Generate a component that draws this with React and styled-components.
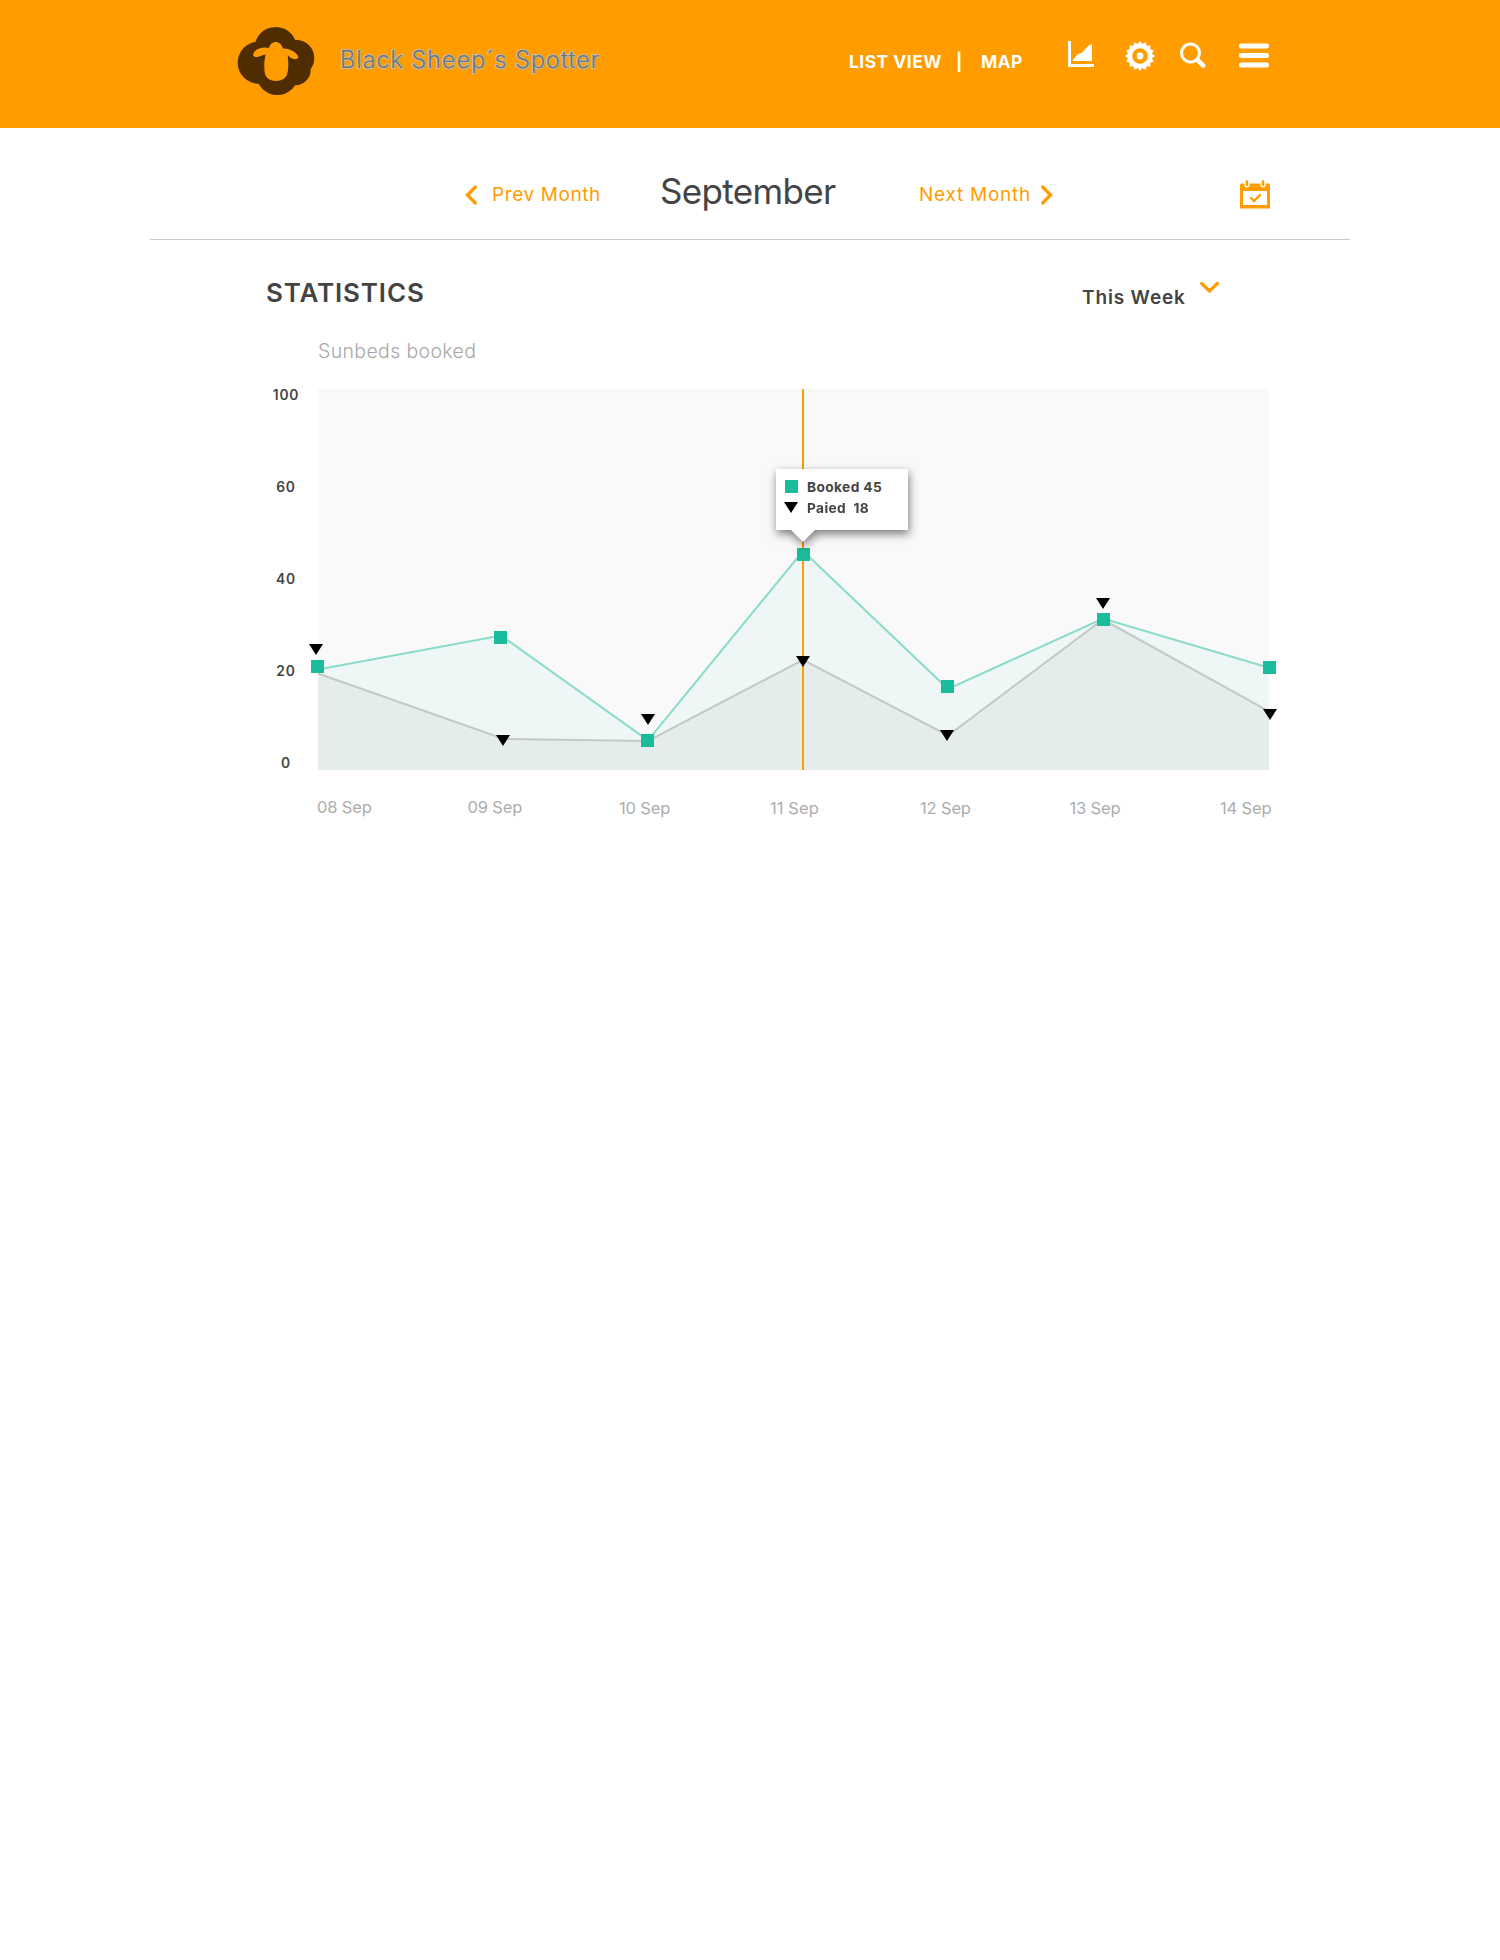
import React from "react";
import styled, { createGlobalStyle } from "styled-components";

const ORANGE = "#ff9d00";
const TEAL = "#1bbc9b";
const DARK = "#444444";

const GlobalStyle = createGlobalStyle`
  * { box-sizing: border-box; }
  body { margin: 0; background: #fff; font-family: Inter, "Liberation Sans", sans-serif; }
  h1, h2, p { margin: 0; font-weight: inherit; }
  button { border: 0; padding: 0; background: none; font: inherit; color: inherit; text-align: left; }
  svg { display: block; flex: none; overflow: visible; }
`;

const Page = styled.div`
  width: 1500px;
  min-height: 1960px;
  background: #fff;
`;

const Label = styled.span`
  display: block;
  flex: none;
  white-space: pre;
  width: ${(p) => p.$w}px;
  font-size: ${(p) => p.$size}px;
  font-weight: ${(p) => p.$weight || 400};
  letter-spacing: ${(p) => p.$track || 0}px;
  line-height: ${(p) => p.$line || 24}px;
  color: ${(p) => p.$color || "inherit"};
`;

const Header = styled.header`
  height: 128px;
  padding: 15px 230px 0 225px;
  display: flex;
  justify-content: space-between;
  background: ${ORANGE};
  color: #fff;
`;

const Brand = styled.div`
  display: flex;
  gap: 15px;
`;

const BrandName = styled(Label)`
  margin-top: 33px;
  color: #74736f;
  -webkit-text-stroke: 2px #c2bbac;
  paint-order: stroke fill;
`;

const Nav = styled.nav`
  display: flex;
  flex: none;
  align-items: flex-start;
  padding-top: 20px;
  width: 421px;
`;

const NavLinks = styled.div`
  display: flex;
  flex: none;
  width: 219px;
  margin-top: 15px;
`;

const Icons = styled.div`
  display: flex;
  flex: none;
  align-items: flex-start;
  padding-top: 6px;
`;

const IconButton = styled.button`
  margin-left: ${(p) => p.$gap || 0}px;
  padding-top: ${(p) => p.$drop || 0}px;
`;

const MonthBar = styled.section`
  width: 1200px;
  height: 112px;
  margin: 0 auto;
  padding: 47px 80px 0 315px;
  display: flex;
  border-bottom: 1px solid #cbcbcf;
  color: ${ORANGE};
`;

const MonthLink = styled.button`
  display: flex;
  align-items: center;
  height: 38px;
  gap: ${(p) => p.$gap}px;
  padding-top: 1px;
  margin-right: ${(p) => p.$after}px;
`;

const CalendarButton = styled.button`
  margin: 0 0 0 auto;
  height: 38px;
`;

const Panel = styled.section`
  padding: 38px 230px 0 266px;
`;

const PanelHead = styled.div`
  display: flex;
  height: 61px;
`;

const Period = styled.button`
  display: flex;
  align-items: flex-start;
  height: 40px;
  margin-left: auto;
  margin-right: 51px;
  gap: 13px;
`;

const Caption = styled(Label)`
  margin-left: 52px;
`;

const ChartRow = styled.div`
  display: flex;
  margin-top: 26px;
`;

const YAxis = styled.div`
  width: 52px;
  padding: 0 14px 0 0;
  margin-top: -6px;
  display: flex;
  flex-direction: column;
  gap: 68px;
  text-align: center;
`;

const Tick = styled.div`
  height: 24px;
  padding-left: 2px;
  line-height: 24px;
  font-size: 13.8px;
  font-weight: 600;
  letter-spacing: 0.8px;
  color: ${DARK};
`;

const Plot = styled.div`
  position: relative;
  width: 951px;
  height: 381px;
  background: #f9f9f9;
`;

const Tooltip = styled.div`
  position: absolute;
  left: 458px;
  top: 80px;
  width: 132px;
  height: 61px;
  padding: 7px 0 0 8px;
  background: #fff;
  filter: drop-shadow(1px 4px 5px rgba(0, 0, 0, 0.5));
  &::after {
    content: "";
    position: absolute;
    left: 15px;
    top: 61px;
    border: 12px solid transparent;
    border-top-color: #fff;
    border-bottom: 0;
  }
`;

const TipRow = styled.div`
  display: flex;
  align-items: center;
  height: 21px;
  gap: 9px;
`;

const XAxis = styled.div`
  display: flex;
  margin: 20px 0 0 51px;
  width: 1000px;
`;

const DateCell = styled.div`
  flex: 0 0 150.5px;
  padding-top: ${(p) => (p.$drop ? 1 : 0)}px;
  padding-left: ${(p) => p.$inset || 0}px;
`;

const Sheep = () => (
  <svg width="100" height="90" viewBox="0 0 300 270">
    <g fill="#4f2d00">
      <circle cx="152" cy="100" r="64" />
      <circle cx="101" cy="143" r="63" />
      <circle cx="214" cy="129" r="54" />
      <circle cx="211" cy="165" r="46" />
      <circle cx="157" cy="176" r="64" />
    </g>
    <path
      fill={ORANGE}
      d="M132 99 C134 88 143 81 152 81 C162 81 171 89 174 101 C190 99 216 112 220 126 C220 135 202 136 188 121 C191 145 190 160 188 172 C184 191 170 198 153 198 C136 198 122 191 119 172 C117 155 117 138 122 119 C109 119 104 127 92 126 C84 125 82 117 88 110 C99 97 120 95 132 99 Z"
    />
  </svg>
);

const StatsIcon = () => (
  <svg width="27" height="26" viewBox="0 0 27 26" fill="#fff">
    <path d="M0 0H3V23H26V26H0Z" />
    <path d="M5 20V19L8.5 14.3C10 12.3 12.5 13.2 14.5 11.3L19 6C20.5 4.2 22 4.2 24 2.5V20Z" />
  </svg>
);

const gearPoints = Array.from({ length: 32 }, (_, i) => {
  const r = i % 2 ? 12.2 : 14.9;
  const a = (i * Math.PI) / 16 - Math.PI / 2;
  return `${(15 + r * Math.cos(a)).toFixed(2)},${(15 + r * Math.sin(a)).toFixed(2)}`;
}).join(" ");

const GearIcon = () => (
  <svg width="30" height="30" viewBox="0 0 30 30">
    <polygon points={gearPoints} fill="#fff" />
    <circle cx="15" cy="15" r="5.6" fill="none" stroke={ORANGE} strokeWidth="4.4" />
  </svg>
);

const SearchIcon = () => (
  <svg width="26" height="27" viewBox="0 0 26 27" fill="none" stroke="#fff">
    <circle cx="10.5" cy="11" r="9" strokeWidth="3" />
    <path d="M17.5 18L23.3 23.7" strokeWidth="4.6" strokeLinecap="round" />
  </svg>
);

const MenuIcon = () => (
  <svg width="30" height="25" viewBox="0 0 30 25" fill="#fff">
    <rect width="30" height="5" rx="2.2" y="0.5" />
    <rect width="30" height="5" rx="2.2" y="10" />
    <rect width="30" height="5" rx="2.2" y="19.5" />
  </svg>
);

const Chevron = ({ w, h, d, sw = 3.3 }) => (
  <svg width={w} height={h} viewBox={`0 0 ${w} ${h}`} fill="none" stroke={ORANGE} strokeWidth={sw} strokeLinecap="round">
    <path d={d} />
  </svg>
);

const CalendarIcon = () => (
  <svg width="30" height="28" viewBox="0 0 30 28">
    <path fill={ORANGE} d="M1 3.5H29L30 4.5V28.5H0V4.5Z" />
    <path fill="#fff" d="M3 11H27V25H3Z" />
    <path d="M7 1.5V4.8M23 1.5V4.8" stroke="#fff" strokeWidth="5.4" strokeLinecap="round" />
    <path d="M7 1.6V4.8M23 1.6V4.8" stroke={ORANGE} strokeWidth="2.6" strokeLinecap="round" />
    <path d="M11 18L14 21L20 15" fill="none" stroke={ORANGE} strokeWidth="2.4" strokeLinecap="round" />
  </svg>
);

const booked = [[0, 280.4], [183, 246.5], [330, 351.3], [485, 162], [630, 300], [785, 229.5], [951, 278.8]];
const paid = [[0, 284.5], [186, 350], [330, 352], [485, 270.8], [630, 346.5], [785, 230.5], [951, 322.3]];
const squares = [[-7, 271], [176, 242], [323, 345], [479, 159], [623, 291], [779, 224], [945, 272]];
const triangles = [[-9, 255], [178, 346], [323, 325], [478, 267], [622, 341], [778, 209], [945, 320]];
const line = (pts) => pts.map((p) => p.join(",")).join(" ");
const area = (pts) => `0,381 ${line(pts)} 951,381`;

const Triangle = () => (
  <svg width="14" height="11" viewBox="0 0 14 11">
    <path d="M0 0H14L7 11Z" />
  </svg>
);

const Swatch = styled.i`
  width: 13px;
  height: 13px;
  margin-left: 1px;
  background: ${TEAL};
`;

const Chart = () => (
  <svg width="951" height="381" viewBox="0 0 951 381">
    <polygon points={area(booked)} fill="#eef7f5" />
    <polygon points={area(paid)} fill="#e4edeb" />
    <polyline points={line(paid)} fill="none" stroke="#c2c9c7" strokeWidth="2" />
    <polyline points={line(booked)} fill="none" stroke="#8adbc9" strokeWidth="2" />
    <rect x="484" y="0" width="2" height="381" fill={ORANGE} />
    {squares.map(([x, y]) => (
      <rect key={x} x={x} y={y} width="13" height="13" fill={TEAL} />
    ))}
    {triangles.map(([x, y]) => (
      <path key={x} d={`M${x} ${y}h14l-7 11z`} />
    ))}
  </svg>
);

const days = [
  { label: "08 Sep" },
  { label: "09 Sep" },
  { label: "10 Sep", inset: 1 },
  { label: "11 Sep", inset: 1.5, track: 0.1 },
  { label: "12 Sep", inset: 1 },
  { label: "13 Sep" },
  { label: "14 Sep" },
];

export default function App() {
  return (
    <Page>
      <GlobalStyle />
      <Header>
        <Brand>
          <Sheep />
          <BrandName $w={262} $size={23.5} $weight={300} $track={0.95}>Black Sheep´s Spotter</BrandName>
        </Brand>
        <Nav>
          <NavLinks>
            <Label $w={107} $size={17.5} $weight={700} $track={0.45}>LIST VIEW</Label>
            <Label $w={25} $size={17} $weight={700}>|</Label>
            <Label $w={60} $size={17.5} $weight={700} $track={0.3}>MAP</Label>
          </NavLinks>
          <Icons>
            <IconButton><StatsIcon /></IconButton>
            <IconButton $gap={30}><GearIcon /></IconButton>
            <IconButton $gap={25} $drop={1}><SearchIcon /></IconButton>
            <IconButton $gap={33} $drop={2}><MenuIcon /></IconButton>
          </Icons>
        </Nav>
      </Header>
      <MonthBar>
        <MonthLink $gap={15} $after={60}>
          <Chevron w={12} h={20} d="M10.3 2L2.5 10L10.3 18" />
          <Label $w={108} $size={19} $track={0.6}>Prev Month</Label>
        </MonthLink>
        <Label as="h1" $w={259} $size={35} $weight={400} $track={-0.65} $color={DARK} $line={32}>September</Label>
        <MonthLink $gap={10} $after={0}>
          <Label $w={112} $size={19} $track={0.75}>Next Month</Label>
          <Chevron w={12} h={20} d="M1.7 2L9.5 10L1.7 18" />
        </MonthLink>
        <CalendarButton><CalendarIcon /></CalendarButton>
      </MonthBar>
      <Panel>
        <PanelHead>
          <Label as="h2" $w={200} $size={26} $weight={600} $track={0.85} $color={DARK} $line={29}>STATISTICS</Label>
          <Period>
            <Label $w={105} $size={19} $weight={600} $track={0.85} $color={DARK} $line={40}>This Week</Label>
            <Chevron w={19} h={20} d="M1.7 5.5L9.5 13L17.3 5.5" />
          </Period>
        </PanelHead>
        <Caption as="p" $w={200} $size={19.5} $weight={320} $track={0.35} $color="#a8a8a8">Sunbeds booked</Caption>
        <ChartRow>
          <YAxis>
            {[100, 60, 40, 20, 0].map((t) => <Tick key={t}>{t}</Tick>)}
          </YAxis>
          <Plot>
            <Chart />
            <Tooltip>
              <TipRow>
                <Swatch />
                <Label $w={90} $size={13.7} $weight={700} $track={0.4} $color={DARK}>Booked 45</Label>
              </TipRow>
              <TipRow>
                <Triangle />
                <Label $w={90} $size={13.7} $weight={700} $track={0.4} $color={DARK}>Paied  18</Label>
              </TipRow>
            </Tooltip>
          </Plot>
        </ChartRow>
        <XAxis>
          {days.map((d, i) => (
            <DateCell key={d.label} $drop={i > 1} $inset={d.inset}>
              <Label $w={70} $size={16.5} $track={d.track ?? -0.15} $color="#adadad">{d.label}</Label>
            </DateCell>
          ))}
        </XAxis>
      </Panel>
    </Page>
  );
}
